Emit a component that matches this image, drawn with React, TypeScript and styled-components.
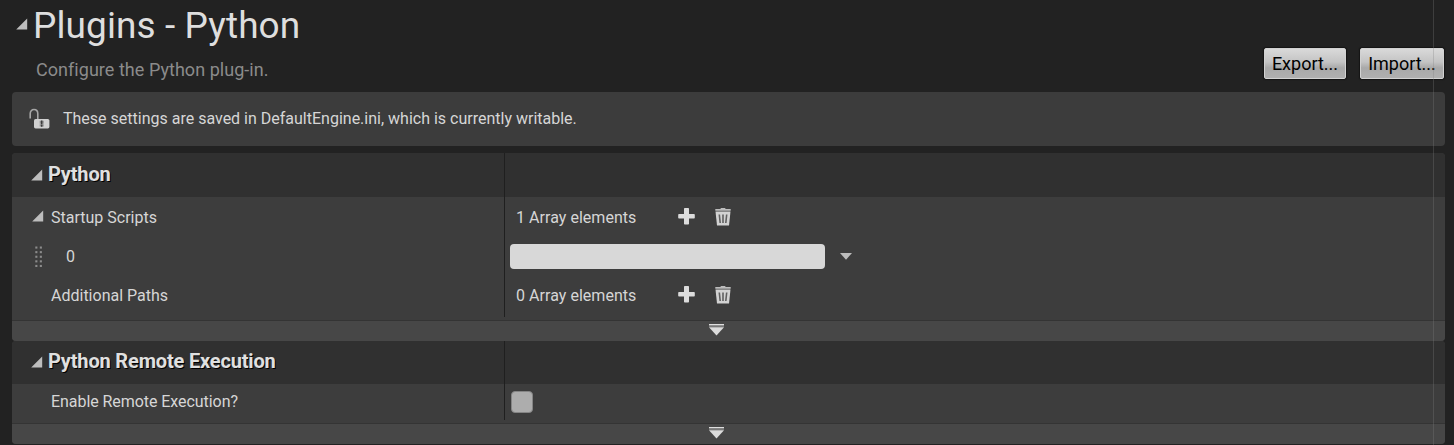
import React from "react";
import styled, { createGlobalStyle } from "styled-components";

const GlobalStyle = createGlobalStyle`
  * { box-sizing: border-box; }
  body { margin: 0; background: #222222; overflow: hidden; }
`;

const Page = styled.main`
  position: relative;
  width: 1454px;
  height: 445px;
  overflow: hidden;
  padding: 0 9px 0 12px;
  background: #222222;
  color: #d6d6d6;
  font-family: Roboto, "Liberation Sans", sans-serif;
  font-size: 16px;
`;

const PageHeader = styled.header`
  display: flex;
  justify-content: space-between;
  height: 92px;
`;

const TitleRow = styled.div`
  display: flex;
  align-items: flex-start;
  padding: 18px 0 0 4px;
  height: 56px;
`;

const Title = styled.h1`
  margin: -14px 0 0 5px;
  font-size: 37px;
  line-height: 44px;
  font-weight: 400;
  letter-spacing: 0.1px;
  color: #dedede;
  white-space: nowrap;
`;

const Subtitle = styled.p`
  margin: 0 0 0 24px;
  font-size: 18px;
  line-height: 28px;
  letter-spacing: 0.04px;
  color: #8b8b8b;
  white-space: nowrap;
`;

const Actions = styled.div`
  display: flex;
  gap: 14px;
  padding: 48px 1px 0 0;
`;

const ActionButton = styled.button<{ $width: number }>`
  width: ${(p) => p.$width}px;
  height: 31px;
  padding: 0;
  border: 1px solid #d2d2d2;
  border-radius: 2px;
  background: linear-gradient(#d9d9d9, #c4c4c4 45%, #a9a9a9 65%, #b0b0b0);
  box-shadow: 0 0 1px 1px #151515;
  color: #000;
  font: 400 18px/29px Roboto, sans-serif;
  white-space: nowrap;
`;

const Notice = styled.div`
  display: flex;
  align-items: center;
  height: 54px;
  margin-bottom: 7px;
  padding: 0 0 2px 17px;
  gap: 13px;
  border-radius: 4px;
  background: #3c3c3c;
  white-space: nowrap;
`;

const Section = styled.section`
  border-radius: 4px;
  overflow: hidden;
  background: #3d3d3d;
`;

const Columns = styled.div`
  display: grid;
  grid-template-columns: 492px 1fr;
  padding-bottom: 3px;
  background: #3d3d3d;
`;

const SectionHeader = styled.div<{ $height: number }>`
  display: grid;
  grid-template-columns: 492px 1fr;
  height: ${(p) => p.$height}px;
  background: #303030;
`;

const HeadingCell = styled.div<{ $top: number }>`
  display: flex;
  align-items: flex-start;
  padding: ${(p) => p.$top}px 0 0 19px;
  gap: 5px;
`;

const Heading = styled.h2`
  margin: -8px 0 0;
  font-size: 20px;
  line-height: 26px;
  font-weight: 700;
  letter-spacing: -0.17px;
  color: #e0e0e0;
  text-shadow: 1px 1px 0 #000;
  white-space: nowrap;
`;

const ValueColumn = styled.div`
  border-left: 1px solid #1f1f1f;
`;

const Cell = styled.div<{ $indent: number; $height?: number; $top?: number }>`
  display: flex;
  align-items: center;
  height: ${(p) => p.$height ?? 39}px;
  padding: ${(p) => p.$top ?? 0}px 0 0 ${(p) => p.$indent}px;
  white-space: nowrap;
`;

const LabelColumn = styled.div`
  display: flex;
  flex-direction: column;
`;

const ValueRows = styled(ValueColumn)`
  height: 120px;
`;

const RowLabel = styled.span<{ $gap?: number }>`
  margin-left: ${(p) => p.$gap ?? 0}px;
  line-height: 20px;
`;

const WideRowLabel = styled(RowLabel)`
  letter-spacing: -0.06px;
`;

const Count = styled.span`
  width: 162px;
  padding-top: 2px;
  letter-spacing: 0.04px;
`;

const IconButton = styled.span<{ $right: number }>`
  display: flex;
  margin-right: ${(p) => p.$right}px;
`;

const ScriptInput = styled.input`
  width: 315px;
  height: 25px;
  margin: 0 15px 0 0;
  border: 0;
  border-radius: 4px;
  background: #d8d8d8;
`;

const Checkbox = styled.span`
  width: 22px;
  height: 22px;
  border: 1px solid #858585;
  border-radius: 4px;
  background: #adadad;
`;

const MoreBar = styled.div`
  display: flex;
  justify-content: center;
  height: 21px;
  padding: 3px 25px 0 0;
  border-top: 1px solid #343434;
  background: #474747;
`;

const ScrollEdge = styled.div`
  position: absolute;
  top: 0;
  bottom: 0;
  left: 1433px;
  width: 1px;
  background: rgba(128, 128, 128, 0.3);
`;

const Svg = styled.svg`
  display: block;
  flex: none;
`;

const Expander = () => (
  <Svg width="12" height="12" viewBox="0 0 12 12">
    <path d="M11.2 0.5V11.5H0.2Z" fill="#bdbdbd" />
  </Svg>
);

const Unlocked = () => (
  <Svg width="21" height="21" viewBox="0 0 21 21">
    <path d="M1.2 10.5V5.8C1.2 3.2 2.7 1.5 5 1.5S8.8 3.2 8.8 5.8V12" fill="none" stroke="#a6a6a6" strokeWidth="1.6" />
    <rect x="5" y="11" width="15.4" height="9.4" rx="1.6" fill="#d0d0d0" />
    <path d="M10.7 12.7h4v3h-4zM10.7 16.2h4v2.4h-4z" fill="#8c8c8c" />
    <path d="M12.7 12.5v3.5M12.7 16.5v2.2" stroke="#3c3c3c" strokeWidth="1.4" />
  </Svg>
);

const Plus = () => (
  <Svg width="17" height="17" viewBox="0 0 17 17">
    <path d="M6.8 0h3.4q0.8 0 0.8 0.8V6h5q0.8 0 0.8 0.8v3q0 0.8-0.8 0.8h-5v5.2q0 0.8-0.8 0.8H6.8q-0.8 0-0.8-0.8v-5.2H1q-0.8 0-0.8-0.8v-3Q0.2 6 1 6h5V0.8Q6 0 6.8 0z" fill="#dcdcdc" />
  </Svg>
);

const Trash = () => (
  <Svg width="16" height="19" viewBox="0 0 16 19">
    <path d="M0.3 2h5L6 1h4l0.7 1h5v1.8H0.3z" fill="#bcbcbc" />
    <path d="M0.5 4.6h15L14 18.5H2z" fill="#d2d2d2" />
    <path d="M4.3 7.5l0.9 8.5M8 7.5V16M11.7 7.5l-0.9 8.5" stroke="#606060" strokeWidth="1.6" />
  </Svg>
);

const Caret = () => (
  <Svg width="12" height="7" viewBox="0 0 12 7">
    <path d="M0 0h12L6 6.8z" fill="#bcbcbc" />
  </Svg>
);

const More = () => (
  <Svg width="15" height="12" viewBox="0 0 15 12">
    <path d="M0 0h15v1.6H0z" fill="#dedede" />
    <path d="M0 1.6h15v1.4H0z" fill="#777" />
    <path d="M0 3.3h15L7.5 11.4z" fill="#dcdcdc" />
  </Svg>
);

const Grip = () => (
  <Svg width="8" height="22" viewBox="0 0 8 22">
    {[0, 1, 2, 3, 4].map((i) => (
      <g key={i} fill="#8c8c8c">
        <rect x="0.3" y={0.5 + i * 4.6} width="2.1" height="2.1" />
        <rect x="4.8" y={0.5 + i * 4.6} width="2.1" height="2.1" />
      </g>
    ))}
  </Svg>
);

const ArrayValue = ({ count }: { count: number }) => (
  <Cell $indent={11}>
    <Count>{count} Array elements</Count>
    <IconButton $right={20}><Plus /></IconButton>
    <IconButton $right={0}><Trash /></IconButton>
  </Cell>
);

const CategoryHeader = ({ title, height, top }: { title: string; height: number; top: number }) => (
  <SectionHeader $height={height}>
    <HeadingCell $top={top}>
      <Expander />
      <Heading>{title}</Heading>
    </HeadingCell>
    <ValueColumn />
  </SectionHeader>
);

const FirstExpander = styled.span`
  display: flex;
  padding-bottom: 4px;
`;

export default function App() {
  return (
    <>
      <GlobalStyle />
      <Page>
        <PageHeader>
          <div>
            <TitleRow>
              <Expander />
              <Title>Plugins - Python</Title>
            </TitleRow>
            <Subtitle>Configure the Python plug-in.</Subtitle>
          </div>
          <Actions>
            <ActionButton $width={82}>Export...</ActionButton>
            <ActionButton $width={84}>Import...</ActionButton>
          </Actions>
        </PageHeader>
        <Notice>
          <Unlocked />
          <span>These settings are saved in DefaultEngine.ini, which is currently writable.</span>
        </Notice>
        <Section>
          <CategoryHeader title="Python" height={44} top={16} />
          <Columns>
            <LabelColumn>
              <Cell $indent={20} $top={2}>
                <FirstExpander><Expander /></FirstExpander>
                <RowLabel $gap={7}>Startup Scripts</RowLabel>
              </Cell>
              <Cell $indent={23} $top={2}>
                <Grip />
                <RowLabel $gap={23}>0</RowLabel>
              </Cell>
              <Cell $indent={39} $top={2}>
                <RowLabel>Additional Paths</RowLabel>
              </Cell>
            </LabelColumn>
            <ValueRows>
              <ArrayValue count={1} />
              <Cell $indent={5} $top={1}>
                <ScriptInput aria-label="Startup script 0" />
                <Caret />
              </Cell>
              <ArrayValue count={0} />
            </ValueRows>
          </Columns>
          <MoreBar><More /></MoreBar>
        </Section>
        <Section>
          <CategoryHeader title="Python Remote Execution" height={43} top={15} />
          <Columns>
            <Cell $indent={39} $height={35}>
              <WideRowLabel>Enable Remote Execution?</WideRowLabel>
            </Cell>
            <ValueColumn>
              <Cell $indent={6} $height={36}><Checkbox /></Cell>
            </ValueColumn>
          </Columns>
          <MoreBar><More /></MoreBar>
        </Section>
        <ScrollEdge />
      </Page>
    </>
  );
}
